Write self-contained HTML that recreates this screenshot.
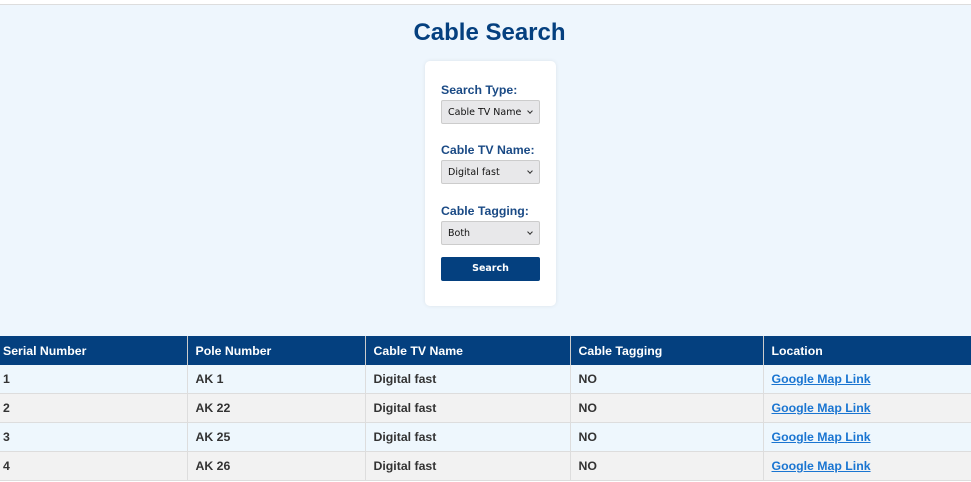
<!DOCTYPE html><html><head><style>
body{margin:0;width:971px;height:482px;overflow:hidden;background:#fff;font-family:"Liberation Sans",sans-serif}
.top{position:absolute;top:4px;left:0;width:971px;height:332px;background:#eef6fd;border-top:1px solid #ddd}
h1{position:absolute;top:19px;left:0;width:979px;text-align:center;margin:0;font-size:24px;color:#05407f;font-weight:bold}
.card{position:absolute;left:425px;top:61px;width:131px;height:245px;background:#fff;border-radius:5px;box-shadow:0 0 4px rgba(0,0,0,.08)}
.lbl{position:absolute;left:16px;font-size:12.3px;font-weight:bold;color:#1a4a85}
.sel{position:absolute;left:16px;height:24px;background:#e8e8ea;border:1px solid #ccc;border-radius:2px;font-family:"DejaVu Sans",sans-serif;font-size:9.5px;line-height:23px;padding-left:6px;box-sizing:border-box;color:#111;width:99px}
.sel:after{content:"";position:absolute;right:7px;top:8px;width:3px;height:3px;border-right:1px solid #333;border-bottom:1px solid #333;transform:rotate(45deg)}
.btn{position:absolute;left:16px;top:196px;width:99px;height:24px;background:#04407f;color:#fff;font-size:9.5px;font-weight:bold;text-align:center;line-height:24px;border-radius:2px;font-family:"DejaVu Sans",sans-serif}
table{position:absolute;top:336px;left:0;width:971px;border-collapse:collapse;font-size:12.3px;font-weight:bold;table-layout:fixed}
th{background:#04407f;color:#fff;text-align:left;height:29px;padding:0 4px 0 8px;border-right:1px solid #ccc}
th:first-child,td:first-child{padding-left:3px}
td{height:28px;padding:0 4px 0 8px;color:#333;border-right:1px solid #ddd;border-bottom:1px solid #ddd}
tr.o td{background:#eef7fd}tr.e td{background:#f2f2f2}
a{color:#1a75d1;text-decoration:underline}
</style></head><body>
<div class="top"></div>
<h1>Cable Search</h1>
<div class="card">
<div class="lbl" style="top:22px">Search Type:</div>
<div class="sel" style="top:39px">Cable TV Name</div>
<div class="lbl" style="top:82px">Cable TV Name:</div>
<div class="sel" style="top:99px">Digital fast</div>
<div class="lbl" style="top:143px">Cable Tagging:</div>
<div class="sel" style="top:160px">Both</div>
<div class="btn">Search</div>
</div>
<table>
<colgroup><col style="width:187px"><col style="width:178px"><col style="width:205px"><col style="width:193px"><col style="width:208px"></colgroup>
<tr><th>Serial Number</th><th>Pole Number</th><th>Cable TV Name</th><th>Cable Tagging</th><th>Location</th></tr>
<tr class="o"><td>1</td><td>AK 1</td><td>Digital fast</td><td>NO</td><td><a>Google Map Link</a></td></tr>
<tr class="e"><td>2</td><td>AK 22</td><td>Digital fast</td><td>NO</td><td><a>Google Map Link</a></td></tr>
<tr class="o"><td>3</td><td>AK 25</td><td>Digital fast</td><td>NO</td><td><a>Google Map Link</a></td></tr>
<tr class="e"><td>4</td><td>AK 26</td><td>Digital fast</td><td>NO</td><td><a>Google Map Link</a></td></tr>
</table>
</body></html>
